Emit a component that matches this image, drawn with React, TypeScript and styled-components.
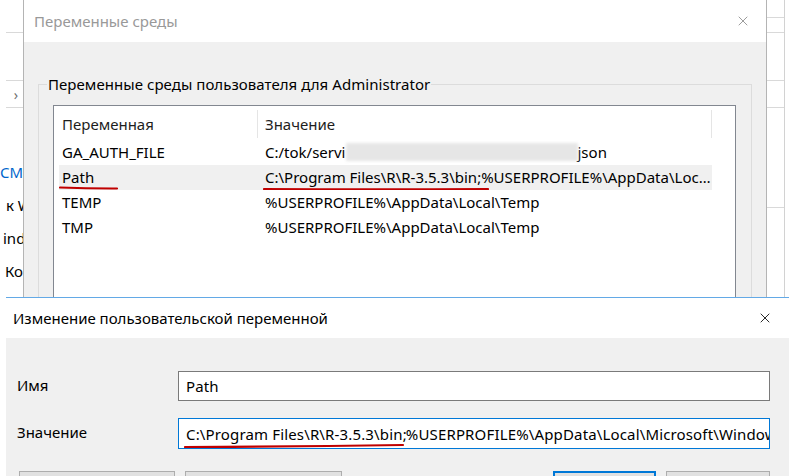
import React from 'react';
import styled, { createGlobalStyle } from 'styled-components';
import { X } from 'lucide-react';

const uiFont = `'Noto Sans', 'Liberation Sans', sans-serif`;

const GlobalStyle = createGlobalStyle`
  html, body {
    margin: 0;
    padding: 0;
    background: #ffffff;
  }
  body {
    font-family: ${uiFont};
  }
`;

const Desktop = styled.div`
  position: relative;
  width: 789px;
  height: 476px;
  overflow: hidden;
  background: #ffffff;
  font-family: ${uiFont};
  font-size: 15px;
  color: #000000;
`;

/* window in the background, only its two edges show */
const BackWindow = styled.div`
  position: absolute;
  inset: 0;
  display: flex;
  justify-content: space-between;
`;

const LeftStrip = styled.div`
  width: 24px;
  padding-left: 6px;
  box-sizing: border-box;
  overflow: hidden;
  display: flex;
  flex-direction: column;
`;

const RightStrip = styled.div`
  width: 19px;
  margin-right: 4px;
  border-right: 1px solid #d2d2d2;
  display: flex;
  flex-direction: column;
`;

const StripRow = styled.div<{ $h: number; $line?: boolean }>`
  height: ${p => p.$h}px;
  box-sizing: border-box;
  border-bottom: ${p => (p.$line ? '1px solid #d9d9d9' : 'none')};
  display: flex;
  align-items: center;
  justify-content: flex-end;
  padding-right: 6px;
  color: #707070;
  font-size: 14px;
`;

const StripTexts = styled.div`
  padding-top: 48px;
  display: flex;
  flex-direction: column;
`;

const StripText = styled.div<{ $shift: number; $link?: boolean }>`
  height: 33px;
  line-height: 33px;
  white-space: nowrap;
  margin-left: ${p => -p.$shift}px;
  color: ${p => (p.$link ? '#0066cc' : '#000000')};
`;

/* main dialog */
const MainWindow = styled.div`
  position: absolute;
  left: 23px;
  top: 0;
  width: 744px;
  height: 490px;
  box-sizing: border-box;
  border-left: 1px solid #b4b4b4;
  border-right: 1px solid #b4b4b4;
  display: flex;
  flex-direction: column;
  background: #f0f0f0;
`;

const TitleBar = styled.div<{ $h: number; $pl: number; $pr: number }>`
  height: ${p => p.$h}px;
  flex-shrink: 0;
  background: #ffffff;
  display: flex;
  align-items: center;
  justify-content: space-between;
  padding: 0 ${p => p.$pr}px 0 ${p => p.$pl}px;
`;

const TitleText = styled.span<{ $inactive?: boolean }>`
  font-size: 15px;
  color: ${p => (p.$inactive ? '#999999' : '#000000')};
`;

const MainBody = styled.div`
  flex: 1;
  padding: 32px 14px 0 14px;
`;

const GroupBox = styled.fieldset`
  margin: 0;
  padding: 11px 15px 0 14px;
  border: 1px solid #dcdcdc;
  height: 400px;
  box-sizing: border-box;
`;

const GroupLegend = styled.legend`
  margin-left: -6px;
  padding: 0 1px;
  font-size: 15px;
  line-height: 20px;
  letter-spacing: 0.05px;
`;

const ListBox = styled.div`
  background: #ffffff;
  border: 1px solid #828790;
  height: 380px;
  padding: 2px 0 0 5px;
`;

const Columns = styled.div<{ $h: number; $selected?: boolean }>`
  display: grid;
  grid-template-columns: 199px 454px;
  height: ${p => p.$h}px;
  width: 653px;
  background: ${p => (p.$selected ? '#f0f0f0' : 'transparent')};
`;

const HeadCell = styled.div<{ $pl: number }>`
  margin: 2px 0 2px;
  padding-left: ${p => p.$pl}px;
  border-right: 1px solid #e5e5e5;
  display: flex;
  align-items: center;
  color: #1e1e1e;
`;

const Cell = styled.div<{ $pl: number }>`
  position: relative;
  padding-left: ${p => p.$pl}px;
  line-height: 25px;
  white-space: nowrap;
  overflow: hidden;
  text-overflow: ellipsis;
`;

const Redacted = styled.span`
  display: inline-block;
  width: 232px;
  height: 18px;
  vertical-align: -3px;
  background: #e6e6e6;
  filter: blur(1.5px);
`;

/* hand drawn red marks from the screenshot */
const Scribble = styled.svg<{ $left: number; $top: number; $w: number }>`
  position: absolute;
  left: ${p => p.$left}px;
  top: ${p => p.$top}px;
  width: ${p => p.$w}px;
  height: 6px;
  overflow: visible;
  pointer-events: none;
`;

function RedLine({ left, top, width, rise = 0 }: { left: number; top: number; width: number; rise?: number }) {
  return (
    <Scribble $left={left} $top={top} $w={width} viewBox={`0 0 ${width} 6`}>
      <path
        d={`M1 ${3 - rise / 2} Q ${width / 2} ${3.6} ${width - 1} ${3 + rise / 2}`}
        stroke="#c00000"
        strokeWidth="2.2"
        strokeLinecap="round"
        fill="none"
      />
    </Scribble>
  );
}

/* edit dialog */
const EditWindow = styled.div`
  position: absolute;
  left: 6px;
  top: 297px;
  width: 783px;
  height: 200px;
  border-top: 1px solid #63a9e6;
  display: flex;
  flex-direction: column;
  background: #f0f0f0;
`;

const EditBody = styled.div`
  padding: 33px 0 0 11px;
`;

const FormGrid = styled.div`
  display: grid;
  grid-template-columns: 161px 592px;
  grid-template-rows: 30px 31px;
  row-gap: 17px;
  align-items: center;
`;

const FieldLabel = styled.div`
  font-size: 15px;
  padding-bottom: 3px;
`;

const FieldBox = styled.div<{ $focused?: boolean }>`
  position: relative;
  height: 100%;
  box-sizing: border-box;
  border: 1px solid ${p => (p.$focused ? '#0078d7' : '#7a7a7a')};
  background: #ffffff;
  padding-left: 7px;
  display: flex;
  align-items: center;
  white-space: nowrap;
  overflow: hidden;
  font-size: 15px;
  letter-spacing: 0.15px;
`;

const Caret = styled.span`
  display: inline-block;
  width: 1px;
  height: 21px;
  margin: 0 -1px 0 0;
  background: #000000;
`;

const ButtonRow = styled.div`
  display: flex;
  width: 751px;
  margin-top: 22px;
  padding-left: 2px;
  gap: 10px;
`;

const Button = styled.div<{ $w: number; $default?: boolean; $push?: boolean }>`
  width: ${p => p.$w}px;
  height: 30px;
  box-sizing: border-box;
  margin-left: ${p => (p.$push ? 'auto' : '0')};
  background: #e1e1e1;
  border: ${p => (p.$default ? '2px solid #0078d7' : '1px solid #adadad')};
  display: flex;
  align-items: center;
  justify-content: center;
  font-size: 15px;
`;

const vars = [
  { name: 'GA_AUTH_FILE', value: null },
  { name: 'Path', value: 'C:\\Program Files\\R\\R-3.5.3\\bin;%USERPROFILE%\\AppData\\Local\\Microsoft\\WindowsApps;' },
  { name: 'TEMP', value: '%USERPROFILE%\\AppData\\Local\\Temp' },
  { name: 'TMP', value: '%USERPROFILE%\\AppData\\Local\\Temp' },
];

export default function App() {
  return (
    <Desktop>
      <GlobalStyle />
      <BackWindow>
        <LeftStrip>
          <StripRow $h={14} />
          <StripRow $h={19} $line />
          <StripRow $h={48} $line />
          <StripRow $h={27} $line>›</StripRow>
          <StripTexts>
            <StripText $shift={6} $link>CMD</StripText>
            <StripText $shift={0}>к Windows</StripText>
            <StripText $shift={3}>indows</StripText>
            <StripText $shift={1}>Компьютер</StripText>
          </StripTexts>
        </LeftStrip>
        <RightStrip>
          <StripRow $h={18} $line />
          <StripRow $h={15} $line />
          <StripRow $h={48} $line />
          <StripRow $h={27} $line />
          <StripRow $h={100} $line />
        </RightStrip>
      </BackWindow>

      <MainWindow>
        <TitleBar $h={42} $pl={10} $pr={15}>
          <TitleText $inactive>Переменные среды</TitleText>
          <X size={16} strokeWidth={1.3} color="#8c8c8c" />
        </TitleBar>
        <MainBody>
          <GroupBox>
            <GroupLegend>Переменные среды пользователя для Administrator</GroupLegend>
            <ListBox>
              <Columns $h={32}>
                <HeadCell $pl={3}>Переменная</HeadCell>
                <HeadCell $pl={7}>Значение</HeadCell>
              </Columns>
              {vars.map(v => (
                <Columns key={v.name} $h={25} $selected={v.name === 'Path'}>
                  <Cell $pl={3}>
                    {v.name}
                    {v.name === 'Path' && <RedLine left={0} top={20} width={59} rise={1} />}
                  </Cell>
                  <Cell $pl={7}>
                    {v.value === null ? (
                      <>
                        C:/tok/servi<Redacted />json
                      </>
                    ) : (
                      v.value
                    )}
                    {v.name === 'Path' && <RedLine left={5} top={21} width={226} />}
                  </Cell>
                </Columns>
              ))}
            </ListBox>
          </GroupBox>
        </MainBody>
      </MainWindow>

      <EditWindow>
        <TitleBar $h={40} $pl={7} $pr={16}>
          <TitleText>Изменение пользовательской переменной</TitleText>
          <X size={16} strokeWidth={1.4} color="#1a1a1a" />
        </TitleBar>
        <EditBody>
          <FormGrid>
            <FieldLabel>Имя</FieldLabel>
            <FieldBox>Path</FieldBox>
            <FieldLabel>Значение</FieldLabel>
            <FieldBox $focused>
              C:\Program Files\R\R-3.5.3\bin;
              <Caret />
              %USERPROFILE%\AppData\Local\Microsoft\WindowsApps;
              <RedLine left={5} top={24} width={220} rise={-2} />
            </FieldBox>
          </FormGrid>
          <ButtonRow>
            <Button $w={156}>Просмотр каталога...</Button>
            <Button $w={157}>Просмотр файла...</Button>
            <Button $w={103} $default $push>ОК</Button>
            <Button $w={104}>Отмена</Button>
          </ButtonRow>
        </EditBody>
      </EditWindow>
    </Desktop>
  );
}
